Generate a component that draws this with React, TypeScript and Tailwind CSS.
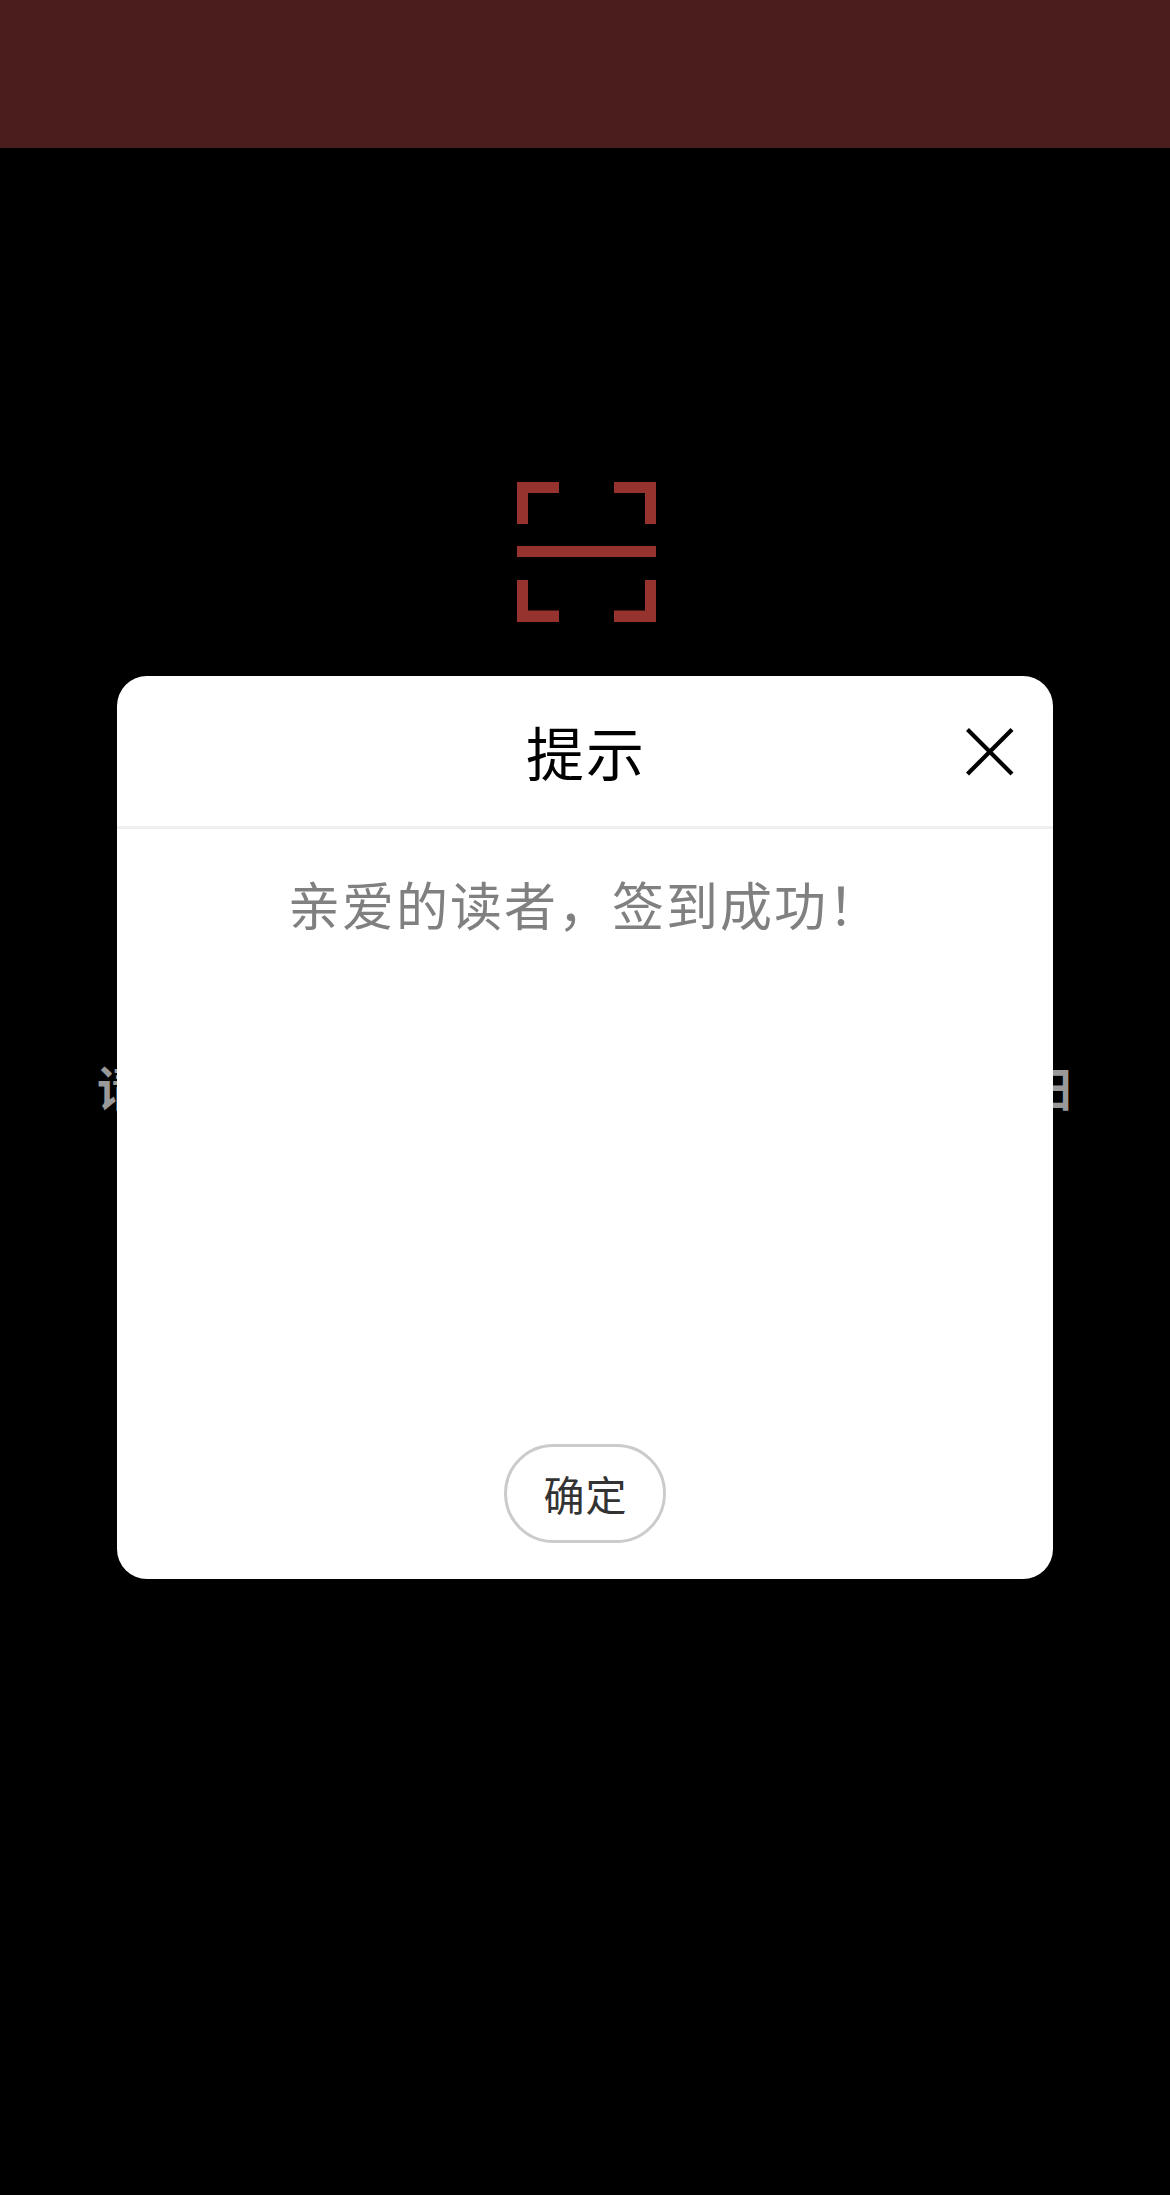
function ScanIcon() {
  return (
    <svg
      className="ml-[517px] block h-[140px] w-[139px] shrink-0"
      viewBox="0 0 139 140"
      fill="#97332f"
      aria-hidden="true"
    >
      <path d="M0 0H42V11H11V42H0Z" />
      <path d="M97 0H139V42H128V11H97Z" />
      <path d="M0 64H139V75H0Z" />
      <path d="M0 98H11V128.500H42V140H0Z" />
      <path d="M128 98H139V140H97V128.500H128Z" />
    </svg>
  );
}

function CloseIcon() {
  return (
    <svg className="block h-[48px] w-[48px]" viewBox="0 0 48 48" stroke="#000" strokeWidth="4.200" aria-hidden="true">
      <path d="M1.500 1.500L46 46M46 1.500L1.500 46" />
    </svg>
  );
}

function Dialog() {
  return (
    <section
      role="dialog"
      className="absolute top-[676px] left-[117px] flex h-[903px] w-[936px] flex-col rounded-[30px] bg-white"
    >
      <header className="grid h-[153px] shrink-0 grid-cols-[1fr_auto_1fr] items-center border-b-[3px] border-[#efefef] px-[39px] pt-[2px]">
        <h1 className="col-start-2 pb-[2px] pl-[2px] text-[58px] leading-[146px] tracking-[2px] text-black">提示</h1>
        <button className="justify-self-end" aria-label="关闭">
          <CloseIcon />
        </button>
      </header>
      <p className="flex-1 pt-[34px] text-center text-[52px] leading-[81px] tracking-[2px] text-[#808080]">
        亲爱的读者，签到成功！
      </p>
      <button className="mx-auto mb-[36px] h-[99px] w-[162px] shrink-0 rounded-[50px] border-[3px] border-[#cbcbcb] pl-px text-[41px] leading-[93px] tracking-[1px] text-[#333]">
        确定
      </button>
    </section>
  );
}

export default function App() {
  return (
    <main className="relative flex h-[2195px] w-[1170px] flex-col overflow-hidden bg-black font-['Noto_Sans_CJK_SC',sans-serif]">
      <div className="h-[148px] shrink-0 bg-[#4b1d1c]" />
      <div className="flex flex-col pt-[334px]">
        <ScanIcon />
        <p className="mt-[428px] flex justify-between pr-[98px] pl-[97px] text-[47px] leading-[72px] font-bold text-[#999]">
          <span>请</span>
          <span>扫</span>
        </p>
      </div>
      <Dialog />
    </main>
  );
}
